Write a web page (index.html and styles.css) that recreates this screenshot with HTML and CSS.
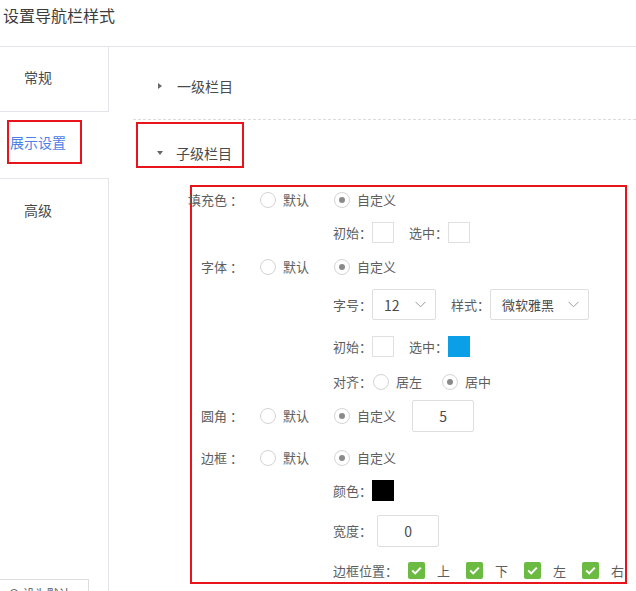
FILE: index.html
```html
<!DOCTYPE html>
<html lang="zh-CN">
<head>
<meta charset="utf-8">
<title>设置导航栏样式</title>
<link rel="stylesheet" href="styles.css">
</head>
<body>
<header class="page-title">设置导航栏样式</header>
<div class="layout">
  <nav class="side">
    <div class="side-item side-first">常规</div>
    <div class="side-item side-active"><span class="mark-tab">展示设置</span></div>
    <div class="side-item side-last">高级</div>
    <div class="side-fill"></div>
  </nav>
  <main class="content">
    <div class="sec-head"><i class="tri tri-right"></i>一级栏目</div>
    <div class="mark-head"><i class="tri tri-down"></i>子级栏目</div>
    <div class="form">
      <div class="row row-radio">
        <span class="lbl">填充色 ：</span>
        <span class="opt"><i class="radio"></i>默认</span>
        <span class="opt"><i class="radio on"></i>自定义</span>
      </div>
      <div class="row sub row-swatch m9">
        <span>初始：</span><i class="swatch"></i>
        <span class="next">选中：</span><i class="swatch"></i>
      </div>
      <div class="row row-radio m11">
        <span class="lbl">字体 ：</span>
        <span class="opt"><i class="radio"></i>默认</span>
        <span class="opt"><i class="radio on"></i>自定义</span>
      </div>
      <div class="row sub row-select m9">
        <span>字号：</span>
        <span class="select select-size"><span class="num-text">12</span><svg class="chev" width="11" height="7" viewBox="0 0 11 7"><polyline points="0.5,0.8 5.5,5.8 10.5,0.8" fill="none" stroke="#9a9a9a" stroke-width="1"/></svg></span>
        <span class="next">样式：</span>
        <span class="select select-font"><span>微软雅黑</span><svg class="chev" width="11" height="7" viewBox="0 0 11 7"><polyline points="0.5,0.8 5.5,5.8 10.5,0.8" fill="none" stroke="#9a9a9a" stroke-width="1"/></svg></span>
      </div>
      <div class="row sub row-swatch m16">
        <span>初始：</span><i class="swatch"></i>
        <span class="next">选中：</span><i class="swatch swatch-blue"></i>
      </div>
      <div class="row sub row-radio row-align m12">
        <span class="align-lbl">对齐：</span>
        <span class="opt"><i class="radio"></i>居左</span>
        <span class="opt"><i class="radio on"></i>居中</span>
      </div>
      <div class="row row-input m5">
        <span class="lbl">圆角 ：</span>
        <span class="opt"><i class="radio"></i>默认</span>
        <span class="opt"><i class="radio on"></i>自定义</span>
        <span class="num-box radius-box">5</span>
      </div>
      <div class="row row-radio m13">
        <span class="lbl">边框 ：</span>
        <span class="opt"><i class="radio"></i>默认</span>
        <span class="opt"><i class="radio on"></i>自定义</span>
      </div>
      <div class="row sub row-swatch m9">
        <span>颜色：</span><i class="swatch swatch-black"></i>
      </div>
      <div class="row sub row-input m14">
        <span>宽度：</span><span class="num-box width-box">0</span>
      </div>
      <div class="row sub row-check m15">
        <span class="pos-lbl">边框位置：</span>
        <span class="check-opt"><i class="check"><svg width="11" height="9" viewBox="0 0 11 9"><polyline points="1.2,4.6 4.2,7.4 9.8,1.6" fill="none" stroke="#fff" stroke-width="2"/></svg></i>上</span>
        <span class="check-opt"><i class="check"><svg width="11" height="9" viewBox="0 0 11 9"><polyline points="1.2,4.6 4.2,7.4 9.8,1.6" fill="none" stroke="#fff" stroke-width="2"/></svg></i>下</span>
        <span class="check-opt"><i class="check"><svg width="11" height="9" viewBox="0 0 11 9"><polyline points="1.2,4.6 4.2,7.4 9.8,1.6" fill="none" stroke="#fff" stroke-width="2"/></svg></i>左</span>
        <span class="check-opt"><i class="check"><svg width="11" height="9" viewBox="0 0 11 9"><polyline points="1.2,4.6 4.2,7.4 9.8,1.6" fill="none" stroke="#fff" stroke-width="2"/></svg></i>右</span>
      </div>
    </div>
  </main>
</div>
<div class="float-btn">⊙ 设为默认</div>
</body>
</html>
```
FILE: styles.css
```css
* { box-sizing: border-box; }
html, body { margin: 0; padding: 0; overflow: hidden; }
body {
  position: relative;
  width: 636px;
  height: 591px;
  background: #fff;
  color: #5e5e5e;
  font-family: "Noto Sans CJK SC", "Microsoft YaHei", sans-serif;
  font-size: 13px;
  line-height: 18px;
}
i { font-style: normal; }

.page-title {
  height: 47px;
  padding: 4px 0 0 3px;
  border-bottom: 1px solid #e4e4ea;
  font-size: 16px;
  line-height: 22px;
  color: #3c3c3c;
}

.layout { display: flex; height: 544px; }

.side { width: 109px; flex: none; display: flex; flex-direction: column; }
.side-item {
  height: 66px;
  flex: none;
  font-size: 14px;
  line-height: 20px;
  color: #4a4a4a;
  border-right: 1px solid #e4e4ea;
}
.side-first { height: 65px; padding: 20px 0 0 24px; border-bottom: 1px solid #e4e4ea; }
.side-active { border-right-color: transparent; padding: 8px 0 0 7px; }
.side-last { border-top: 1px solid #e4e4ea; padding: 21px 0 0 24px; }
.side-fill { flex: 1; border-right: 1px solid #e4e4ea; }

.mark-tab {
  display: flex;
  align-items: center;
  width: 75px;
  height: 44px;
  padding-left: 1px;
  border: 2px solid #e8141c;
  color: #4d7fe6;
}

.content { flex: 1; padding-left: 24px; }

.sec-head {
  display: flex;
  align-items: center;
  padding: 29px 0 23px 25px;
  border-bottom: 1px dashed #dcdcdc;
  font-size: 14px;
  line-height: 20px;
  color: #4a4a4a;
}
.tri { display: block; width: 0; height: 0; border-style: solid; }
.tri-right {
  border-width: 3.5px 0 3.5px 4px;
  border-color: transparent transparent transparent #666;
  margin-right: 15px;
}
.tri-down {
  border-width: 4px 3.5px 0 3.5px;
  border-color: #666 transparent transparent transparent;
  margin-right: 13px;
}
.mark-head {
  display: flex;
  align-items: center;
  width: 108px;
  height: 46px;
  margin: 2px 0 0 3px;
  padding: 15px 0 0 19px;
  border: 2px solid #e8141c;
  font-size: 14px;
  line-height: 20px;
  color: #4a4a4a;
}

.form {
  width: 437px;
  margin: 17px 0 0 57px;
  padding-bottom: 3px;
  border: 2px solid #e8141c;
}

.row { display: flex; align-items: center; white-space: nowrap; }
.row-radio { height: 26px; }
.row-swatch { height: 21px; }
.row-select { height: 31px; }
.row-input { height: 32px; }
.row-check { height: 17px; }
.sub { padding-left: 141px; }
.m5 { margin-top: 5px; }
.m9 { margin-top: 9px; }
.m11 { margin-top: 11px; }
.m12 { margin-top: 12px; }
.m13 { margin-top: 13px; }
.m14 { margin-top: 14px; }
.m15 { margin-top: 15px; }
.m16 { margin-top: 16px; }

.lbl {
  width: 51px;
  flex: none;
  display: flex;
  justify-content: flex-end;
  margin-right: 17px;
}
.next { margin-left: 15px; }

.opt { display: flex; align-items: center; gap: 7px; }
.opt + .opt { margin-left: 25px; }
.row-align .opt + .opt { margin-left: 20px; }
.align-lbl { margin-right: 1px; }

.radio {
  display: flex;
  align-items: center;
  justify-content: center;
  width: 16px;
  height: 16px;
  border: 1px solid #d4d4d4;
  border-radius: 50%;
  background: #fff;
}
.radio.on::after {
  content: "";
  width: 6px;
  height: 6px;
  border-radius: 50%;
  background: #8a8a8a;
}

.swatch {
  display: block;
  width: 22px;
  height: 21px;
  border: 1px solid #e0e0e0;
  background: #fff;
}
.swatch-blue { background: #0a9fe6; border-color: #0a9fe6; }
.swatch-black { background: #000; border-color: #000; }

.select {
  display: flex;
  align-items: center;
  justify-content: space-between;
  height: 31px;
  padding: 0 9px 0 11px;
  border: 1px solid #dedede;
  border-radius: 2px;
  color: #4a4a4a;
}
.select-size { width: 64px; }
.select-font { width: 99px; }
.num-text { font-size: 14px; }
.chev { display: block; }

.num-box {
  display: flex;
  align-items: center;
  justify-content: center;
  width: 62px;
  height: 32px;
  border: 1px solid #dedede;
  border-radius: 2px;
  font-size: 14px;
  color: #4a4a4a;
}
.radius-box { margin-left: 16px; }
.width-box { margin-left: 5px; }

.pos-lbl { margin-right: 10px; }
.check-opt { display: flex; align-items: center; gap: 12px; margin-right: 16px; }
.check {
  display: flex;
  align-items: center;
  justify-content: center;
  width: 17px;
  height: 17px;
  border-radius: 2px;
  background: #6bba42;
}

.float-btn {
  position: absolute;
  left: 0;
  top: 579px;
  width: 89px;
  height: 24px;
  padding: 6px 0 0 8px;
  border-top: 1px solid #ddd;
  border-right: 1px solid #ddd;
  background: #fff;
  font-size: 12px;
  line-height: 16px;
  color: #555;
  white-space: nowrap;
  overflow: hidden;
}
```
